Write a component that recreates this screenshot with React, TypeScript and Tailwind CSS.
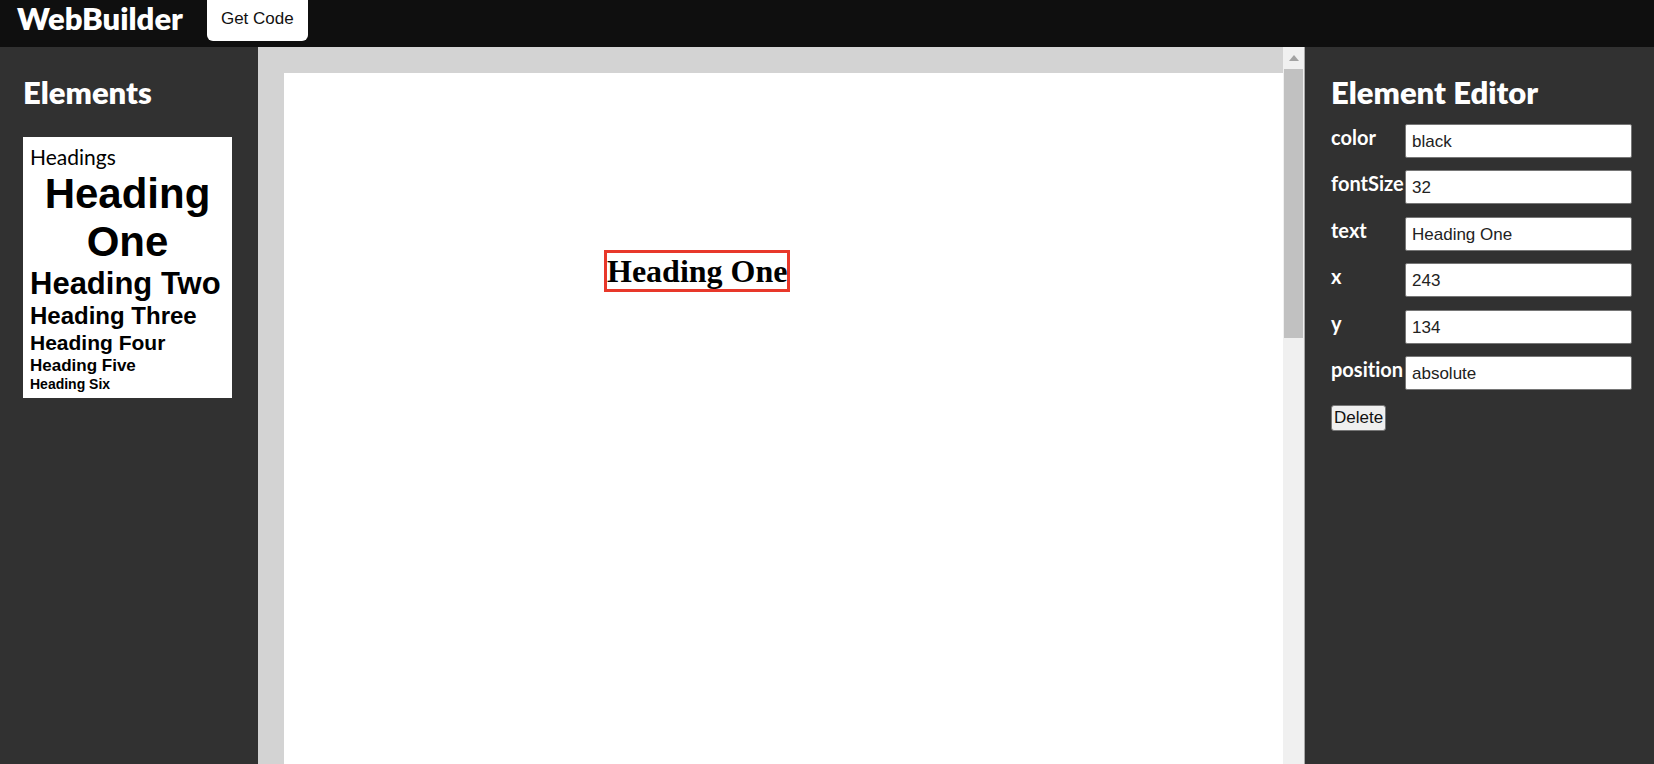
import { useState } from "react";

const headings = [
  { tag: "h1", label: "Heading One", style: "text-center text-[42px] leading-[48px]" },
  { tag: "h2", label: "Heading Two", style: "whitespace-nowrap text-[31px] leading-9" },
  { tag: "h3", label: "Heading Three", style: "text-[24px] leading-7" },
  { tag: "h4", label: "Heading Four", style: "text-[21px] leading-[26px]" },
  { tag: "h5", label: "Heading Five", style: "text-[17px] leading-5" },
  { tag: "h6", label: "Heading Six", style: "text-[14px] leading-4" },
] as const;

const initialFields = {
  color: "black",
  fontSize: "32",
  text: "Heading One",
  x: "243",
  y: "134",
  position: "absolute",
};

type Field = keyof typeof initialFields;

function Header() {
  return (
    <header className="flex h-[47px] items-start gap-6 bg-[#0f0f0f] pl-[17px]">
      <h1 className="text-[31px] leading-9 font-extrabold text-white">WebBuilder</h1>
      <button
        type="button"
        className="h-[41px] rounded-b-md bg-white px-[14px] pb-[4px] font-['Liberation_Sans',sans-serif] text-[17px] text-[#111]"
      >
        Get Code
      </button>
    </header>
  );
}

function ElementsPanel() {
  return (
    <aside className="w-[258px] shrink-0 bg-[#313131] px-[23px] pt-[27px]">
      <h2 className="text-[31px] leading-9 font-extrabold text-white">Elements</h2>
      <section className="mt-[27px] mr-[3px] bg-white px-[7px] pt-[7px] pb-[6px] text-black">
        <p className="text-[21px] leading-[26px]">Headings</p>
        <div className="font-['Liberation_Sans',sans-serif] font-bold">
          {headings.map(({ tag: Tag, label, style }) => (
            <Tag key={Tag} className={style}>
              {label}
            </Tag>
          ))}
        </div>
      </section>
    </aside>
  );
}

function Canvas({ text }: { text: string }) {
  return (
    <main className="flex min-w-0 flex-1 bg-[#d3d3d3]">
      <div className="relative mt-[26px] ml-[26px] flex-1 bg-white">
        <h1 className="absolute top-[177px] left-[320px] border-3 border-[#e8382a] font-['Liberation_Serif',serif] text-[32px] leading-9 font-bold whitespace-nowrap text-black">
          {text}
        </h1>
      </div>
      <div className="flex w-[22px] flex-col border-r border-[#a8a8a8] bg-[#f0f0f0]">
        <div className="flex h-[22px] items-center justify-center">
          <svg viewBox="0 0 10 6" className="h-[6px] w-[10px]" aria-hidden="true">
            <path d="M0 6 5 0l5 6z" fill="#a3a3a3" />
          </svg>
        </div>
        <div className="mx-px h-[269px] bg-[#c1c1c1]" />
      </div>
    </main>
  );
}

function EditorPanel({
  fields,
  onChange,
}: {
  fields: Record<Field, string>;
  onChange: (name: Field, value: string) => void;
}) {
  return (
    <aside className="w-[349px] shrink-0 bg-[#313131] pt-[27px] pr-[22px] pl-[26px]">
      <h2 className="text-[31px] leading-9 font-extrabold text-white">Element Editor</h2>
      <form className="mt-[14px]" onSubmit={(e) => e.preventDefault()}>
        <div className="flex h-[266px] flex-col justify-between">
          {(Object.keys(fields) as Field[]).map((name) => (
            <div key={name} className="flex items-start">
              <label
                htmlFor={name}
                className="w-[74px] shrink-0 text-[20px] leading-[26px] font-bold text-white [font-variant-ligatures:none]"
              >
                {name}
              </label>
              <input
                id={name}
                type="text"
                value={fields[name]}
                onChange={(e) => onChange(name, e.target.value)}
                className="h-[34px] min-w-0 flex-1 rounded-[2px] border border-[#767676] bg-white px-[6px] pt-[2px] font-['Liberation_Sans',sans-serif] text-[17px] text-[#222]"
              />
            </div>
          ))}
        </div>
        <button
          type="button"
          className="mt-[15px] flex h-[26px] items-center rounded-[3px] border border-[#767676] bg-[#efefef] px-[2px] font-['Liberation_Sans',sans-serif] text-[17px] text-[#111]"
        >
          Delete
        </button>
      </form>
    </aside>
  );
}

export default function App() {
  const [fields, setFields] = useState<Record<Field, string>>(initialFields);

  return (
    <div className="flex min-h-screen flex-col font-['Lato',sans-serif]">
      <Header />
      <div className="flex flex-1">
        <ElementsPanel />
        <Canvas text={fields.text} />
        <EditorPanel
          fields={fields}
          onChange={(name, value) => setFields({ ...fields, [name]: value })}
        />
      </div>
    </div>
  );
}
